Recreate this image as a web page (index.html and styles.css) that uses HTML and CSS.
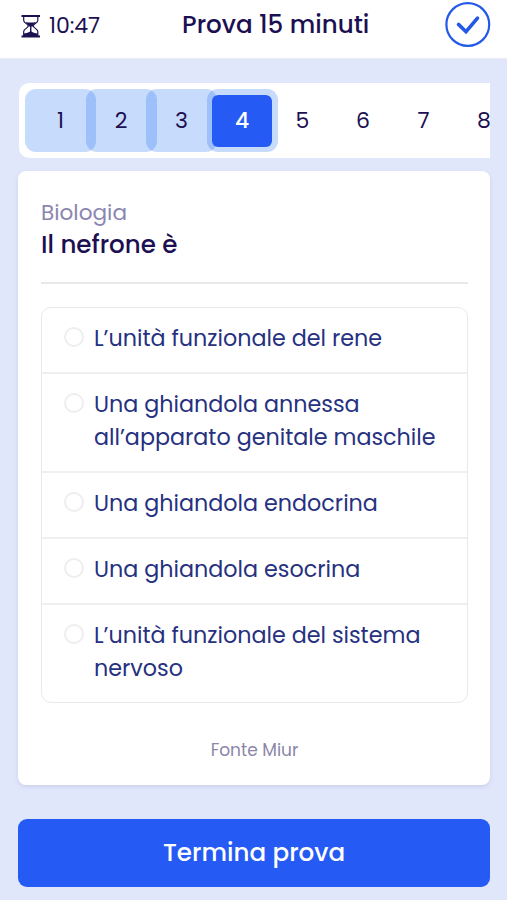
FILE: index.html
```html
<!DOCTYPE html>
<html lang="it">
<head>
    <meta charset="UTF-8">
    <meta name="viewport" content="width=device-width, initial-scale=1.0">
    <title>Prova 15 minuti</title>
    <link rel="stylesheet" href="styles.css">
</head>
<body>
    <header class="topbar">
        <div class="timer">
            <svg class="hourglass" viewBox="0 0 20 24" width="20" height="24">
                <path d="M.5 2h18.500M.5 22.500h18.500" stroke="#1c1052" stroke-width="1.800"/>
                <path d="M2.700 2v4.500c0 2.600 4.500 3.500 4.500 5.500s-4.500 2.900-4.500 5.500V22M16.800 2v4.500c0 2.600-4.500 3.500-4.500 5.500s4.500 2.900 4.500 5.500V22" fill="none" stroke="#1c1052" stroke-width="1.200"/>
                <path d="M4.500 8c3 .8 7.500.8 10.500 0-.8 2-3 2.600-3 4.500H7.500C7.500 10.600 5.300 10 4.500 8zM2.700 22v-2.500c2-.3 5.600-1 7-2.500 1.400 1.500 5 2.200 7 2.500V22z" fill="#1c1052"/>
                <path d="M9.750 12v6" stroke="#1c1052" stroke-width="1.400"/>
            </svg>
            <span class="time">10:47</span>
        </div>
        <h1 class="title">Prova 15 minuti</h1>
        <svg class="check" viewBox="0 0 46 46" width="46" height="46">
            <circle cx="22.800" cy="22.500" r="21.400" fill="none" stroke="#2459e8" stroke-width="2.200"/>
            <path d="M13.500 22.400l7.500 7.300 11.500-13.500" fill="none" stroke="#2459e8" stroke-width="3.600" stroke-linecap="round" stroke-linejoin="miter"/>
        </svg>
    </header>

    <main class="content">
        <nav class="pager">
            <div class="page done">1</div>
            <div class="page done">2</div>
            <div class="page done">3</div>
            <div class="page done active"><span class="current">4</span></div>
            <div class="page">5</div>
            <div class="page">6</div>
            <div class="page">7</div>
            <div class="page">8</div>
        </nav>

        <section class="card">
            <div class="question">
                <p class="subject">Biologia</p>
                <h2 class="text">Il nefrone è</h2>
            </div>
            <ul class="answers">
                <li class="answer"><span class="radio"></span><span class="label">L’unità funzionale del rene</span></li>
                <li class="answer"><span class="radio"></span><span class="label">Una ghiandola annessa<br>all’apparato genitale maschile</span></li>
                <li class="answer"><span class="radio"></span><span class="label">Una ghiandola endocrina</span></li>
                <li class="answer"><span class="radio"></span><span class="label">Una ghiandola esocrina</span></li>
                <li class="answer"><span class="radio"></span><span class="label">L’unità funzionale del sistema<br>nervoso</span></li>
            </ul>
            <p class="source">Fonte Miur</p>
        </section>

        <button class="finish">Termina prova</button>
    </main>
</body>
</html>
```
FILE: styles.css
```css
* {
    box-sizing: border-box;
    margin: 0;
    padding: 0;
}
body {
    font-family: Poppins, Inter, sans-serif;
    background: #e1e7fb;
    color: #1c1052;
    height: 900px;
    overflow: hidden;
}
.topbar {
    display: grid;
    grid-template-columns: 161px 1fr 46px;
    height: 59px;
    padding: 2px 16px 0 21px;
    background: #fff;
    border-bottom: 1px solid #ececf2;
}
.timer {
    display: flex;
    align-items: center;
    gap: 8px;
    height: 47px;
}
.time {
    font-size: 22px;
    letter-spacing: -0.1px;
}
.title {
    font-size: 24.6px;
    font-weight: 500;
    line-height: 46px;
    white-space: nowrap;
}
.check {
    display: block;
}
.content {
    padding: 24px 17px 0 18px;
}
.pager {
    display: flex;
    height: 75px;
    margin-left: 1px;
    padding: 6px 0 6px 6px;
    background: #fff;
    border-radius: 10px 0 0 10px;
    overflow: hidden;
}
.page {
    display: flex;
    flex: none;
    align-items: center;
    justify-content: center;
    width: 71px;
    height: 63px;
    margin-right: -10.5px;
    border-radius: 11px;
    font-size: 22px;
}
.page.done {
    background: rgba(31, 111, 243, 0.25);
}
.page.active {
    background: none;
    box-shadow: inset 0 0 0 6px rgba(31, 111, 243, 0.25);
}
.current {
    display: flex;
    align-items: center;
    justify-content: center;
    width: 60px;
    height: 52px;
    border-radius: 6px;
    background: #255af4;
    color: #fff;
    font-weight: 500;
    z-index: 1;
}
.card {
    height: 614px;
    margin-top: 13px;
    padding: 26px 22px 0 23px;
    background: #fff;
    border-radius: 8px;
    box-shadow: 0 2px 4px rgba(90, 90, 140, 0.15);
}
.question {
    height: 87px;
    border-bottom: 2px solid #e8e8ea;
}
.subject {
    color: #8b86b0;
    font-size: 21.6px;
    line-height: 32px;
}
.text {
    font-size: 24.6px;
    font-weight: 500;
    line-height: 32px;
}
.answers {
    margin-top: 23px;
    border: 1px solid #e9e9ec;
    border-radius: 10px;
    list-style: none;
}
.answer {
    display: flex;
    gap: 10px;
    padding: 14px 0 17px 22px;
    border-bottom: 2px solid #efeff1;
}
.answer:last-child {
    border-bottom: none;
}
.radio {
    flex: none;
    width: 20px;
    height: 20px;
    margin-top: 5px;
    border: 2px solid #eeeef0;
    border-radius: 50%;
}
.label {
    color: #26317f;
    font-size: 22.25px;
    line-height: 33px;
    white-space: nowrap;
}
.source {
    margin-top: 35px;
    color: #8b86a8;
    font-size: 17px;
    line-height: 24px;
    text-align: center;
}
.finish {
    display: block;
    width: 100%;
    height: 68px;
    margin-top: 34px;
    padding-bottom: 2px;
    border: none;
    border-radius: 9px;
    background: #255af4;
    color: #fff;
    font-family: inherit;
    font-size: 24.6px;
    font-weight: 500;
}
```
